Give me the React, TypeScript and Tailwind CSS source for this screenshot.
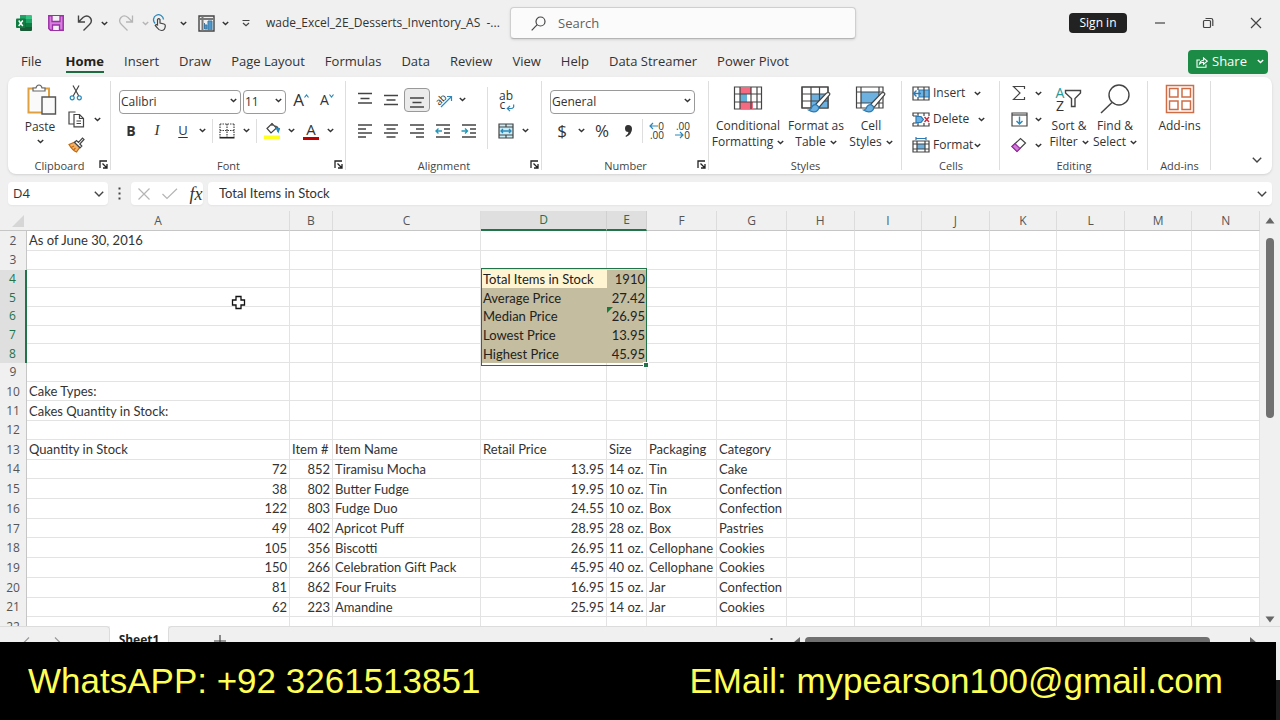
import React from 'react';

const menuTabs = ['File', 'Home', 'Insert', 'Draw', 'Page Layout', 'Formulas', 'Data', 'Review', 'View', 'Help', 'Data Streamer', 'Power Pivot'];

const columns = ['A', 'B', 'C', 'D', 'E', 'F', 'G', 'H', 'I', 'J', 'K', 'L', 'M', 'N'];

const columnWidths = ['w-[263px]', 'w-[43px]', 'w-[148px]', 'w-[126px]', 'w-[40px]', 'w-[70px]', 'w-[70px]'];

type Row = (string | number)[];

const rows: Record<number, Row> = {
  2: ['As of June 30, 2016'],
  4: ['', '', '', 'Total Items in Stock', 1910],
  5: ['', '', '', 'Average Price', 27.42],
  6: ['', '', '', 'Median Price', 26.95],
  7: ['', '', '', 'Lowest Price', 13.95],
  8: ['', '', '', 'Highest Price', 45.95],
  10: ['Cake Types:'],
  11: ['Cakes Quantity in Stock:'],
  13: ['Quantity in Stock', 'Item #', 'Item Name', 'Retail Price', 'Size', 'Packaging', 'Category'],
  14: [72, 852, 'Tiramisu Mocha', 13.95, '14 oz.', 'Tin', 'Cake'],
  15: [38, 802, 'Butter Fudge', 19.95, '10 oz.', 'Tin', 'Confection'],
  16: [122, 803, 'Fudge Duo', 24.55, '10 oz.', 'Box', 'Confection'],
  17: [49, 402, 'Apricot Puff', 28.95, '28 oz.', 'Box', 'Pastries'],
  18: [105, 356, 'Biscotti', 26.95, '11 oz.', 'Cellophane', 'Cookies'],
  19: [150, 266, 'Celebration Gift Pack', 45.95, '40 oz.', 'Cellophane', 'Cookies'],
  20: [81, 862, 'Four Fruits', 16.95, '15 oz.', 'Jar', 'Confection'],
  21: [62, 223, 'Amandine', 25.95, '14 oz.', 'Jar', 'Cookies'],
};

const rowNumbers = Array.from({ length: 21 }, (_, i) => i + 2);

interface IconProps {
  w?: number;
  h?: number;
  className?: string;
  children: React.ReactNode;
}

const Icon: React.FC<IconProps> = ({ w = 20, h = 20, className = '', children }) => (
  <svg
    width={w}
    height={h}
    viewBox={`0 0 ${w} ${h}`}
    fill="none"
    stroke="#444"
    strokeWidth="1.2"
    className={`shrink-0 ${className}`}
    aria-hidden="true"
  >
    {children}
  </svg>
);

const Chevron: React.FC<{ className?: string }> = ({ className = '' }) => (
  <svg width="7" height="5" viewBox="0 0 7 5" fill="none" stroke="currentColor" strokeWidth="1.4" className={`shrink-0 ${className}`} aria-hidden="true">
    <path d="M0.8 0.9L3.5 3.6L6.2 0.9" />
  </svg>
);

const BigChevron: React.FC = () => (
  <svg width="10" height="6" viewBox="0 0 10 6" fill="none" stroke="#444" strokeWidth="1.4" aria-hidden="true">
    <path d="M0.8 0.8L5 5L9.2 0.8" />
  </svg>
);

const DropButton: React.FC<{ label: string; className?: string }> = ({ label, className = '' }) => (
  <button type="button" aria-label={label} className={`flex h-5 w-3 shrink-0 items-center justify-center ${className}`}>
    <Chevron />
  </button>
);

interface ToolProps {
  label: string;
  className?: string;
  children: React.ReactNode;
}

const Tool: React.FC<ToolProps> = ({ label, className = '', children }) => (
  <button type="button" aria-label={label} className={`flex h-6 w-[26px] shrink-0 items-center justify-center rounded ${className}`}>
    {children}
  </button>
);

const Launcher: React.FC<{ label: string }> = ({ label }) => (
  <button type="button" aria-label={label} className="absolute right-[3px] bottom-[5px]">
    <Icon w={9} h={9}>
      <path d="M1 8V1H8M3.5 3.5L7.5 7.5M8 4V8H4" strokeWidth="1.3" stroke="#222" />
    </Icon>
  </button>
);

interface GroupProps {
  title: string;
  className: string;
  launcher?: boolean;
  children: React.ReactNode;
}

const Group: React.FC<GroupProps> = ({ title, className, launcher, children }) => (
  <section aria-label={title} className={`relative flex shrink-0 flex-col pt-[3px] ${className}`}>
    <div className="flex h-[78px]">{children}</div>
    <div className="text-center text-[11px] leading-4 text-[#444]">{title}</div>
    {launcher && <Launcher label={`${title} settings`} />}
    <span className="absolute top-1 right-0 h-[89px] w-px bg-[#dedede]" />
  </section>
);

interface PickerProps {
  label: string;
  value: string;
  className: string;
}

const Picker: React.FC<PickerProps> = ({ label, value, className }) => (
  <div className={`relative h-6 ${className}`}>
    <select aria-label={label} defaultValue={value} className="h-6 w-full appearance-none rounded border border-[#9a9a9a] bg-white pl-px text-[12px] text-[#333]">
      <option>{value}</option>
    </select>
    <Chevron className="pointer-events-none absolute top-2.5 right-1" />
  </div>
);

const Divider: React.FC<{ className?: string }> = ({ className = '' }) => <span className={`w-px shrink-0 bg-[#dedede] ${className}`} />;

const TitleBar: React.FC = () => (
  <header className="flex h-12 items-center">
    <div className="flex w-[510px] shrink-0 items-center">
      <Icon w={16} h={16} className="ml-4">
        <g stroke="none">
          <path d="M4 0H10V8H4Z" fill="#21a366" />
          <path d="M10 0H15Q16 0 16 1V8H10Z" fill="#33c481" />
          <path d="M4 4H16V8H4Z" fill="#107c41" />
          <path d="M10 4H16V8H10Z" fill="#21a366" />
          <path d="M4 8H16V15Q16 16 15 16H5Q4 16 4 15Z" fill="#185c37" />
          <path d="M10 8H16V12H10Z" fill="#107c41" />
          <rect y="3.500" width="9.500" height="9.500" rx="1" fill="#107c41" />
        </g>
        <path d="M2.700 5.500L6.800 11M6.800 5.500L2.700 11" stroke="#fff" strokeWidth="1.500" />
      </Icon>
      <Tool label="Save" className="ml-[11px]">
        <Icon w={16} h={16}>
          <path d="M0.800 0.800H15.200V15.200H2.500L0.800 13.500Z" fill="#d67fdd" stroke="#9b2fa6" strokeWidth="1.500" />
          <path d="M4 1V6.500H12V1M4.500 15V10H11.500V15" fill="#f3f0f3" stroke="#9b2fa6" strokeWidth="1.300" />
        </Icon>
      </Tool>
      <Tool label="Undo" className="ml-[3px]">
        <Icon w={16} h={18}>
          <path d="M1.500 1.500V8H8M1.800 7.700L6 3.500Q10 0.300 13 3.500Q16 7 12.500 10.500L6.500 16.500" strokeWidth="1.400" />
        </Icon>
      </Tool>
      <DropButton label="Undo list" />
      <Tool label="Redo" className="ml-[3px]">
        <Icon w={16} h={18}>
          <path d="M14.500 1.500V8H8M14.200 7.700L10 3.500Q6 0.300 3 3.500Q0 7 3.500 10.500L9.500 16.500" strokeWidth="1.300" stroke="#b5b5b5" />
        </Icon>
      </Tool>
      <DropButton label="Redo list" className="text-[#b5b5b5]" />
      <Tool label="Touch mode">
        <Icon w={16} h={18} className="mr-2">
          <path d="M3.200 9.500A5 5 0 1 1 11.500 5.500" stroke="#2b88b8" strokeWidth="1.300" />
          <path d="M5.500 11V5.500Q6.700 3.800 8 5.500V9L12 10Q13.500 10.500 13.300 12Q13 16.500 9.500 16.500Q7 16.500 5.500 14L3.200 11.500Q4 10 5.500 11Z" fill="#f0f0f0" />
        </Icon>
      </Tool>
      <DropButton label="Touch mode list" />
      <Tool label="Pivot view" className="ml-1">
        <Icon w={17} h={17}>
          <path d="M1 1H16V16H1Z" strokeWidth="1.400" />
          <path d="M1 4H16M4.500 1V16" stroke="#777" strokeWidth="2" />
          <path d="M6.500 8V14H9V10H6.500M10 15V6H14V15" fill="#4f97c9" stroke="#3c78a3" strokeWidth="1" />
        </Icon>
      </Tool>
      <DropButton label="Pivot view list" />
      <button type="button" aria-label="Customize toolbar" className="ml-[11px]">
        <Icon w={8} h={8}>
          <path d="M0.500 1.500H7.500M1 4L4 6.800L7 4" />
        </Icon>
      </button>
      <h1 className="ml-4 text-[12px] whitespace-pre text-[#333]">wade_Excel_2E_Desserts_Inventory_AS  -...</h1>
    </div>
    <label className="flex h-8 w-[346px] items-center rounded border border-[#cfcfcf] border-b-[#b5b5b5] bg-[#fbfbfb] shadow-sm">
      <Icon w={15} h={15} className="ml-5">
        <circle cx="9.500" cy="5.500" r="4.500" />
        <path d="M6.200 8.700L0.700 14.300" />
      </Icon>
      <input type="search" aria-label="Search" placeholder="Search" className="ml-3 w-60 bg-transparent text-[13px] outline-none placeholder:text-[#616161]" />
    </label>
    <div className="ml-auto flex items-center">
      <button type="button" className="h-5 w-[58px] rounded-sm bg-[#222] text-[12px] leading-5 text-white">Sign in</button>
      <button type="button" aria-label="Minimize" className="ml-[9px] flex h-8 w-12 items-center justify-center">
        <Icon w={12} h={12}><path d="M1 6H11" /></Icon>
      </button>
      <button type="button" aria-label="Restore" className="flex h-8 w-12 items-center justify-center">
        <Icon w={12} h={12}>
          <rect x="1.500" y="3.500" width="7" height="7" rx="1" />
          <path d="M3.500 1.500H9Q10.800 1.500 10.800 3.200V9" />
        </Icon>
      </button>
      <button type="button" aria-label="Close" className="flex h-8 w-12 items-center justify-center">
        <Icon w={12} h={12}><path d="M1 1L11 11M11 1L1 11" /></Icon>
      </button>
    </div>
  </header>
);

const MenuBar: React.FC = () => (
  <nav className="flex h-[31px] items-center pr-3 pl-[21px]">
    <div className="flex gap-5 text-[13px] leading-5 whitespace-nowrap text-[#333]">
      {menuTabs.map((tab) => (
        <button
          key={tab}
          type="button"
          className={tab === 'Home' ? 'ml-1 border-b-2 border-[#1e6b41] font-bold text-[#222]' : 'border-b-2 border-transparent'}
        >
          {tab}
        </button>
      ))}
    </div>
    <button type="button" className="ml-auto flex h-6 w-20 items-center rounded bg-[#1b8b45] pl-2 text-[13px] text-white">
      <Icon w={12} h={12}>
        <path d="M4 4H1V11.300H10V8.500M3.500 8Q4 4.500 7.500 4.200V2L11.300 5.200L7.500 8.300V6.300Q5 6.200 3.500 8Z" stroke="#fff" strokeWidth="1.100" />
      </Icon>
      <span className="ml-1">Share</span>
      <Chevron className="mr-1 ml-auto" />
    </button>
  </nav>
);

const Lines: React.FC<{ d: string; arrow?: string }> = ({ d, arrow }) => (
  <Icon w={16} h={16}>
    <path d={d} strokeWidth="1.400" />
    {arrow && <path d={arrow} stroke="#2797b8" strokeWidth="1.400" />}
  </Icon>
);

const Brush: React.FC = () => (
  <g>
    <path d="M28.500 8.500Q30.500 9 29.500 11L19 23.500L15.500 20.500L26.500 9Z" fill="#fff" strokeWidth="1.200" />
    <path d="M8.500 26Q11.500 25.500 12 22.500Q14.500 19.500 17.500 21.500Q19.800 24 17.500 26.500Q14 29.500 8.500 26Z" fill="#6cb1e0" stroke="#2b7ab3" />
  </g>
);

interface TallProps {
  lines: string[];
  className: string;
  chevron?: boolean;
  children: React.ReactNode;
}

const TallButton: React.FC<TallProps> = ({ lines, className, chevron = true, children }) => (
  <button type="button" className={`flex shrink-0 flex-col items-center pt-1 text-[12px] leading-4 whitespace-nowrap ${className}`}>
    {children}
    <span className="mt-1">{lines[0]}</span>
    {lines[1] && (
      <span className="flex items-center gap-1">
        {lines[1]}
        {chevron && <Chevron />}
      </span>
    )}
  </button>
);

const Ribbon: React.FC = () => (
  <div className="mx-2 flex h-[99px] rounded-lg bg-white text-[#333] shadow">
    <Group title="Clipboard" launcher className="w-[103px]">
      <button type="button" className="ml-2 flex w-12 flex-col items-center pt-1 text-[12px] leading-4">
        <Icon w={30} h={32} className="ml-1">
          <path d="M1.500 4.500H22V28.500H1.500Z" fill="#fff" stroke="#e0a040" strokeWidth="2" />
          <path d="M4 6.500H20V26.500H4Z" fill="#fafafa" stroke="none" />
          <path d="M6 7V4H9Q9.500 1 12 1Q14.500 1 15 4H18V7Z" fill="#fff" stroke="#666" />
          <path d="M15 13H28.500V30H15Z" fill="#fafafa" stroke="#555" strokeWidth="1.400" />
        </Icon>
        <span className="mt-[3px]">Paste</span>
        <Chevron className="mt-1" />
      </button>
      <div className="ml-px flex flex-col">
        <Tool label="Cut" className="my-px">
          <Icon w={14} h={16} className="mr-1">
            <path d="M4 0.500L9.800 11M10 0.500L4.200 11" />
            <circle cx="3.200" cy="12.800" r="2" stroke="#2b88b8" />
            <circle cx="10.300" cy="12.800" r="2" stroke="#2b88b8" />
          </Icon>
        </Tool>
        <div className="my-px flex items-center">
          <Tool label="Copy">
            <Icon w={17} h={17} className="mr-1">
              <path d="M6 13H1V1H7.500" />
              <path d="M6 3.500H11.500L15.500 7.500V15.800H6Z" fill="#fff" />
              <path d="M11.500 3.500V7.500H15.500M8.500 10H13M8.500 12.500H13" />
            </Icon>
          </Tool>
          <DropButton label="Copy list" />
        </div>
        <Tool label="Format painter" className="my-px">
          <Icon w={17} h={16} className="mr-1">
            <path d="M1 7.500L7 5L12 10L8.500 15Q4.500 13.500 1 7.500Z" fill="#f3b36a" stroke="#c46a10" />
            <path d="M3 10.500L6 9M5.500 13L7.500 11" stroke="#c46a10" />
            <path d="M6.500 5.500L8.500 3.500L10.500 5.500L14.500 1L16 2.500L11.800 7L13.800 9L12 10.800Z" fill="#fff" />
          </Icon>
        </Tool>
      </div>
    </Group>

    <Group title="Font" launcher className="w-[235px]">
      <div className="flex flex-col pt-1 pl-[7px]">
        <div className="flex h-[31px] items-center">
          <Picker label="Font name" value="Calibri" className="ml-px w-[122px]" />
          <Picker label="Font size" value="11" className="ml-0.5 w-[43px]" />
          <Tool label="Increase font size" className="ml-0.5">
            <span className="text-[17px] leading-5">A</span>
            <Icon w={5} h={4} className="mb-2"><path d="M0.500 3.500L2.500 1L4.500 3.500" stroke="#2b88b8" /></Icon>
          </Tool>
          <Tool label="Decrease font size">
            <span className="text-[14px] leading-5">A</span>
            <Icon w={5} h={4} className="mb-2"><path d="M0.500 0.500L2.500 3L4.500 0.500" stroke="#2b88b8" /></Icon>
          </Tool>
        </div>
        <div className="flex h-[31px] items-center">
          <Tool label="Bold"><b className="text-[14px]">B</b></Tool>
          <Tool label="Italic"><i className="font-['Liberation_Serif',serif] text-[15px]">I</i></Tool>
          <Tool label="Underline"><span className="text-[13px] underline underline-offset-2">U</span></Tool>
          <DropButton label="Underline list" />
          <Divider className="ml-1 h-6" />
          <Tool label="Borders" className="ml-px">
            <Icon w={16} h={16}>
              <path d="M1 1H15M1 1V14M15 1V14M8 1V14M1 7.500H15" strokeDasharray="1.500 1" />
              <path d="M0.500 14.700H15.500" stroke="#222" strokeWidth="1.600" />
            </Icon>
          </Tool>
          <DropButton label="Borders list" />
          <Divider className="ml-1 h-6" />
          <Tool label="Fill color" className="ml-0.5">
            <Icon w={16} h={18}>
              <path d="M3 6.500L8 1.500L12.500 6L7 11Z" fill="#fff" />
              <path d="M8 1.500V4M11 4Q15 4 14 10" />
              <path d="M12.500 6.500L15.500 6.500L14.300 10Z" fill="#2b88b8" stroke="#2b88b8" />
              <path d="M0 13.500H16V17H0Z" fill="#ffff1f" stroke="none" />
            </Icon>
          </Tool>
          <DropButton label="Fill color list" />
          <Tool label="Font color" className="ml-px flex-col">
            <span className="text-[15px] leading-4">A</span>
            <span className="h-[3px] w-4 bg-[#c00000]" />
          </Tool>
          <DropButton label="Font color list" />
        </div>
      </div>
    </Group>

    <Group title="Alignment" launcher className="w-[196px]">
      <div className="flex flex-col pt-1 pl-1.5">
        <div className="flex h-[31px] items-center">
          <Tool label="Top align"><Lines d="M1 1.500H15M3.500 6.500H12.500M1 11H15" /></Tool>
          <Tool label="Middle align"><Lines d="M1 3.500H15M3.500 8H12.500M1 12.500H15" /></Tool>
          <Tool label="Bottom align" className="border border-[#999] bg-[#ebebeb]"><Lines d="M1 6H15M3.500 10.500H12.500M1 15H15" /></Tool>
          <Tool label="Orientation">
            <span className="relative flex h-4 w-4 items-center">
              <span className="-rotate-45 text-[10px]">ab</span>
              <Icon w={16} h={16} className="absolute top-0 left-0.5">
                <path d="M4 15L14.500 4.500M10 4.500H14.500V9" stroke="#2b88b8" />
              </Icon>
            </span>
          </Tool>
          <DropButton label="Orientation list" />
        </div>
        <div className="flex h-[31px] items-center">
          <Tool label="Align left"><Lines d="M1 2H15M1 6H9M1 10H15M1 14H9" /></Tool>
          <Tool label="Center"><Lines d="M1 2H15M3.500 6H12.500M1 10H15M3.500 14H12.500" /></Tool>
          <Tool label="Align right"><Lines d="M1 2H15M7 6H15M1 10H15M7 14H15" /></Tool>
          <Tool label="Decrease indent"><Lines d="M1 2H15M9 6H15M9 10H15M1 14H15" arrow="M7 8H1M3.500 5.500L1 8L3.500 10.500" /></Tool>
          <Tool label="Increase indent"><Lines d="M1 2H15M9 6H15M9 10H15M1 14H15" arrow="M0.500 8H6.500M4 5.500L6.500 8L4 10.500" /></Tool>
        </div>
      </div>
      <Divider className="mt-[7px] ml-[5px] h-[62px]" />
      <div className="flex flex-col pt-1 pl-[5px]">
        <div className="flex h-[31px] items-center">
          <Tool label="Wrap text" className="relative flex-col">
            <span className="text-[12px] leading-[9px]">ab</span>
            <span className="flex w-[13px] text-[12px] leading-[9px]">c</span>
            <Icon w={9} h={8} className="absolute right-1 bottom-0">
              <path d="M7.500 0.500Q8.500 4.500 5 4.500H1.500M4 1.800L1.300 4.500L4 7.200" stroke="#2b88b8" />
            </Icon>
          </Tool>
        </div>
        <div className="flex h-[31px] items-center">
          <Tool label="Merge and center">
            <Icon w={16} h={16}>
              <path d="M1 1H15V15H1Z" fill="#c9edf7" />
              <path d="M1 4H15M1 12H15M8 1V4M8 12V15" />
              <path d="M3 8H13M5 6L3 8L5 10M11 6L13 8L11 10" stroke="#2b88b8" strokeWidth="1.300" />
            </Icon>
          </Tool>
          <DropButton label="Merge list" />
        </div>
      </div>
    </Group>

    <Group title="Number" launcher className="w-[167px]">
      <div className="flex flex-col pt-1 pl-[7px]">
        <div className="flex h-[31px] items-center">
          <Picker label="Number format" value="General" className="ml-px w-[145px]" />
        </div>
        <div className="flex h-[31px] items-center">
          <Tool label="Currency"><span className="text-[17px]">$</span></Tool>
          <DropButton label="Currency list" />
          <Tool label="Percent" className="ml-0.5"><span className="text-[17px]">%</span></Tool>
          <Tool label="Comma style">
            <Icon w={9} h={14}>
              <path d="M4 1Q8 1 8 5Q8 10 2 13L1.500 12Q4.500 10 4.500 8Q1 8 1 4.500Q1 1 4 1Z" fill="#333" stroke="none" />
            </Icon>
          </Tool>
          <Divider className="ml-px h-6" />
          {['Increase decimal', 'Decrease decimal'].map((label, i) => (
            <Tool key={label} label={label} className="flex-col">
              <span className="flex w-4 items-center justify-end text-[10px] leading-[9px]">
                {i === 0 ? (
                  <Icon w={9} h={8}><path d="M9 4H1M4 1L1 4L4 7" stroke="#2b88b8" /></Icon>
                ) : '.0'}
                0
              </span>
              <span className="flex w-4 items-center justify-end text-[10px] leading-[9px]">
                {i === 1 ? (
                  <Icon w={9} h={8}><path d="M0 4H8M5 1L8 4L5 7" stroke="#2b88b8" /></Icon>
                ) : '.0'}
                0
              </span>
            </Tool>
          ))}
        </div>
      </div>
    </Group>

    <Group title="Styles" className="w-[193px]">
      <TallButton lines={['Conditional', 'Formatting']} className="ml-[3px] w-[72px]">
        <Icon w={30} h={30}>
          <path d="M1.500 3H28.500V25H1.500Z" fill="#fff" />
          <path d="M7 3H18V10H7ZM7 18H20V25H7Z" fill="#f56a80" stroke="none" />
          <path d="M7 10H14V18H7Z" fill="#63b0d8" stroke="none" />
          <path d="M1.500 10H28.500M1.500 18H28.500M7 3V25M18 3V25M24 3V25" />
        </Icon>
      </TallButton>
      <TallButton lines={['Format as', 'Table']} className="w-[64px]">
        <Icon w={32} h={30}>
          <path d="M2 3H28V24H2Z" fill="#fff" />
          <path d="M11 10H28V24H11Z" fill="#6cb1e0" stroke="none" />
          <path d="M2 10H28M2 17H28M11 3V24M19.500 3V24M2 3H28V24H2Z" />
          <Brush />
        </Icon>
      </TallButton>
      <TallButton lines={['Cell', 'Styles']} className="w-[46px]">
        <Icon w={32} h={30}>
          <path d="M1.500 3H28V24H1.500Z" fill="#fff" />
          <path d="M6 8H24V19H6Z" fill="#6cb1e0" stroke="none" />
          <path d="M1.500 8H28M1.500 19H28M6 3V24M24 3V24" />
          <Brush />
        </Icon>
      </TallButton>
    </Group>

    <Group title="Cells" className="w-[98px]">
      <div className="flex flex-col pl-2.5 text-[12px]">
        <button type="button" className="flex h-[26px] items-center">
          <Icon w={18} h={15}>
            <path d="M1 1H17V14H1Z" />
            <path d="M7 4H17V11H7Z" fill="#6cb1e0" stroke="#2b7ab3" />
            <path d="M6 1V4M12 1V14M6 11V14" />
            <path d="M9 7.500H1.500M4.500 4.500L1.500 7.500L4.500 10.500" stroke="#2b7ab3" strokeWidth="1.400" />
          </Icon>
          <span className="ml-[3px] w-[41px] text-left">Insert</span>
          <Chevron />
        </button>
        <button type="button" className="flex h-[26px] items-center">
          <Icon w={18} h={15}>
            <path d="M1 4V1H17V4M1 11V14H17V11M1 4H5M1 11H5M6 1V4M12 1V4M6 11V14M12 11V14" />
            <path d="M4 4.500H9L11.500 7.500L9 10.500H4Z" fill="#6cb1e0" stroke="#2b7ab3" />
            <path d="M12.500 5L17 10M17 5L12.500 10" stroke="#c92a3c" strokeWidth="1.400" />
          </Icon>
          <span className="ml-[3px] w-[45px] text-left">Delete</span>
          <Chevron />
        </button>
        <button type="button" className="flex h-[26px] items-center">
          <Icon w={18} h={16}>
            <path d="M1 4H17V15H1Z" />
            <path d="M5 7H13V12H5Z" fill="#6cb1e0" stroke="none" />
            <path d="M1 7H17M1 12H17M5 4V15M13 4V15" />
            <path d="M4 1.500H14M4 0V3M14 0V3" stroke="#2b7ab3" />
          </Icon>
          <span className="ml-[3px] w-[41px] text-left">Format</span>
          <Chevron />
        </button>
      </div>
    </Group>

    <Group title="Editing" className="w-[148px]">
      <div className="flex w-[46px] flex-col pl-1.5">
        <div className="flex h-[26px] items-center">
          <Tool label="Sum">
            <Icon w={14} h={16}><path d="M12.500 4V1.500H1.500L8 8L1.500 14.500H12.500V12" /></Icon>
          </Tool>
          <DropButton label="Sum list" />
        </div>
        <div className="flex h-[26px] items-center">
          <Tool label="Fill">
            <Icon w={17} h={15}>
              <path d="M1 1H16V14H1Z" />
              <path d="M1 3H16" />
              <path d="M8.500 4.500V12M5.500 9L8.500 12L11.500 9" stroke="#2b88b8" strokeWidth="1.400" />
            </Icon>
          </Tool>
          <DropButton label="Fill list" />
        </div>
        <div className="flex h-[26px] items-center">
          <Tool label="Clear">
            <Icon w={16} h={16}>
              <path d="M1 9.500L9.500 1.500L14.500 6L6 14.500Z" fill="#fff" />
              <path d="M1 9.500L4 6.700L9 11.500L6 14.500Z" fill="#d27fd9" stroke="#9b2fa6" />
            </Icon>
          </Tool>
          <DropButton label="Clear list" />
        </div>
      </div>
      <TallButton lines={['Sort &', 'Filter']} className="w-[46px]">
        <span className="flex h-[30px] items-center">
          <span className="flex flex-col text-[14px] leading-[13px]">
            <span className="text-[#259a9a]">A</span>
            <span>Z</span>
          </span>
          <Icon w={18} h={20}>
            <path d="M1.500 1.500H16.500V4L11 9.500V17.500H7.500V9.500L1.500 4Z" strokeWidth="1.400" />
          </Icon>
        </span>
      </TallButton>
      <TallButton lines={['Find &', 'Select']} className="w-[46px]">
        <Icon w={30} h={30}>
          <circle cx="19" cy="11" r="10" strokeWidth="1.400" />
          <path d="M12 18.500L1 29" strokeWidth="1.500" />
        </Icon>
      </TallButton>
    </Group>

    <Group title="Add-ins" className="w-[63px]">
      <TallButton lines={['Add-ins']} className="w-full">
        <Icon w={30} h={30}>
          <path d="M1.500 1.500H28.500V28.500H1.500ZM4.500 4.500H13V13H4.500ZM17 4.500H25.500V13H17ZM4.500 17H13V25.500H4.500ZM17 17H25.500V25.500H17Z" stroke="#cf6d46" strokeWidth="1.500" />
        </Icon>
      </TallButton>
    </Group>

    <button type="button" aria-label="Collapse ribbon" className="mt-auto mr-2.5 mb-[11px] ml-auto">
      <BigChevron />
    </button>
  </div>
);

const FormulaBar: React.FC = () => (
  <div className="mx-2 mt-2 flex h-[23px] items-center text-[#333]">
    <div className="flex h-full w-[100px] items-center rounded bg-white pr-1 shadow-xs">
      <input aria-label="Name box" defaultValue="D4" className="w-20 grow pl-[5px] text-[13px] outline-none" />
      <BigChevron />
    </div>
    <Icon w={3} h={13} className="mx-[10px]">
      <path d="M1.500 0.500V2.500M1.500 5.500V7.500M1.500 10.500V12.500" strokeWidth="2" />
    </Icon>
    <div className="flex h-full w-[72px] items-center rounded bg-white shadow-xs">
      <Tool label="Cancel">
        <Icon w={12} h={12}><path d="M0.500 0.500L11.500 11.500M11.500 0.500L0.500 11.500" stroke="#b5b5b5" /></Icon>
      </Tool>
      <Tool label="Enter">
        <Icon w={16} h={12}><path d="M0.500 6L5 10.500L15 0.800" stroke="#b5b5b5" /></Icon>
      </Tool>
      <Tool label="Insert function" className="w-5">
        <i className="font-['Liberation_Serif',serif] text-[18px] leading-5">fx</i>
      </Tool>
    </div>
    <div className="ml-[5px] flex h-full grow items-center rounded bg-white pr-[5px] shadow-xs">
      <input aria-label="Formula" defaultValue="Total Items in Stock" className="grow pl-[11px] font-[Lato,sans-serif] text-[13px] outline-none" />
      <BigChevron />
    </div>
  </div>
);

const isSelected = (col: number, row: number) => (col === 3 || col === 4) && row >= 4 && row <= 8;

const cellTone = (col: number, row: number) => {
  if (row === 4 && col === 3) return 'bg-[#fff5d3] text-[#222]';
  if (isSelected(col, row)) return 'bg-[#c4bd9f] text-[#222]';
  return 'border-r border-b border-[#e3e3e3]';
};

const Sheet: React.FC = () => (
  <div className="mt-1.5 flex min-h-0 grow">
    <div className="relative h-full grow overflow-hidden">
      <table className="h-[425px] w-full table-fixed border-separate border-spacing-0 font-[Lato,sans-serif] text-[13px] leading-[18px] text-[#333]">
        <colgroup>
          <col className="w-[27px]" />
          {columns.map((name, i) => (
            <col key={name} className={columnWidths[i]} />
          ))}
        </colgroup>
        <thead>
          <tr className="font-['Open_Sans',sans-serif] text-[12px] text-[#555]">
            <td className="border-b border-[#c6c6c6] p-0">
              <Icon w={12} h={12} className="ml-3">
                <path d="M12 0V12H0Z" fill="#d6d6d6" stroke="none" />
              </Icon>
            </td>
            {columns.map((name, i) => (
              <th
                key={name}
                scope="col"
                className={
                  i === 3 || i === 4
                    ? 'border-r border-b-2 border-r-[#d0d0d0] border-b-[#21744a] bg-[#dfdfdf] p-0 font-normal text-[#21744a]'
                    : 'border-r border-b border-r-[#dcdcdc] border-b-[#c6c6c6] p-0 font-normal'
                }
              >
                {name}
              </th>
            ))}
          </tr>
        </thead>
        <tbody>
          {rowNumbers.map((n) => (
            <tr key={n}>
              <th
                scope="row"
                className={
                  n >= 4 && n <= 8
                    ? "border-r-2 border-[#21744a] bg-[#dfdfdf] p-0 font-['Open_Sans',sans-serif] text-[12px] font-normal text-[#21744a]"
                    : "border-r border-[#c6c6c6] p-0 font-['Open_Sans',sans-serif] text-[12px] font-normal text-[#555]"
                }
              >
                {n}
              </th>
              {columns.map((name, i) => {
                const value = rows[n]?.[i];
                return (
                  <td
                    key={name}
                    className={`relative p-0 px-0.5 whitespace-nowrap ${typeof value === 'number' ? 'text-right' : ''} ${isSelected(i, n) ? '' : 'bg-white'} ${cellTone(i, n)}`}
                  >
                    {value}
                    {n === 6 && name === 'E' && (
                      <Icon w={6} h={6} className="absolute top-0 left-0">
                        <path d="M0 0H6L0 6Z" fill="#1a7a3c" stroke="none" />
                      </Icon>
                    )}
                  </td>
                );
              })}
            </tr>
          ))}
        </tbody>
      </table>
      {/* selection frame D4:E8 with its fill handle */}
      <div className="pointer-events-none absolute top-[57px] left-[481px] h-[98px] w-[166px] border border-[#21744a]">
        <span className="absolute -right-0.5 -bottom-0.5 h-1 w-1 bg-[#21744a] outline outline-white" />
      </div>
      <Icon w={16} h={16} className="pointer-events-none absolute top-[84px] left-[231px]">
        <path d="M5 1.500H10V5H13.500V10H10V13.500H5V10H1.500V5H5Z" fill="#fff" stroke="#111" strokeWidth="1.300" />
      </Icon>
    </div>
    <div className="flex w-5 shrink-0 flex-col items-center pt-1.5 pb-[3px]">
      <Icon w={10} h={7}><path d="M5 0.500L9.500 6.500H0.500Z" fill="#666" stroke="none" /></Icon>
      <span className="mt-3.5 h-[180px] w-2 rounded-full bg-[#707070]" />
      <Icon w={10} h={7} className="mt-auto"><path d="M5 6.500L9.500 0.500H0.500Z" fill="#666" stroke="none" /></Icon>
    </div>
  </div>
);

const SheetTabs: React.FC = () => (
  <div className="flex h-4 shrink-0 overflow-hidden">
    <div className="flex w-[110px] shrink-0 items-start rounded-tr border-t border-r border-[#dcdcdc] pt-2.5 pl-[22px]">
      <Icon w={8} h={12}><path d="M7 0.500L1.500 6L7 11.500" stroke="#999" /></Icon>
      <Icon w={8} h={12} className="ml-6"><path d="M1 0.500L6.500 6L1 11.500" stroke="#999" /></Icon>
    </div>
    <button type="button" className="h-7 w-[58px] shrink-0 bg-white text-[12px] leading-7 font-bold text-[#222]">Sheet1</button>
    <div className="flex grow items-start rounded-tl border-t border-l border-[#dcdcdc]">
      <button type="button" aria-label="New sheet" className="mt-2 ml-[45px]">
        <Icon w={12} h={12}><path d="M6 0V12M0 6H12" /></Icon>
      </button>
      <Icon w={3} h={12} className="mt-2.5 ml-auto"><path d="M1.500 1V3" strokeWidth="2" /></Icon>
      <Icon w={8} h={12} className="mt-2.5 ml-5"><path d="M7 0V11L0.500 5.500Z" fill="#666" stroke="none" /></Icon>
      <span className="mt-2.5 ml-1 h-2 w-[405px] rounded-full bg-[#707070]" />
      <Icon w={8} h={12} className="mt-2.5 mr-[23px] ml-[39px]"><path d="M1 0V11L7.500 5.500Z" fill="#666" stroke="none" /></Icon>
    </div>
  </div>
);

const ContactBanner: React.FC = () => (
  <footer className="flex h-[78px] shrink-0 bg-[#1c1c1c] font-['Liberation_Sans',sans-serif] text-[35px] text-[#ffff55]">
    <div className="flex grow items-center justify-between bg-black pr-[53px] pl-7">
      <span>WhatsAPP: +92 3261513851</span>
      <span>EMail: mypearson100@gmail.com</span>
    </div>
    <span className="h-[38px] w-1 bg-[#ececec]" />
  </footer>
);

const App: React.FC = () => {
  return (
    <main className="flex h-screen flex-col overflow-hidden bg-[#f0f0f0] font-['Open_Sans',sans-serif] text-[#333]">
      <TitleBar />
      <MenuBar />
      <Ribbon />
      <FormulaBar />
      <Sheet />
      <SheetTabs />
      <ContactBanner />
    </main>
  );
};

export default App;
